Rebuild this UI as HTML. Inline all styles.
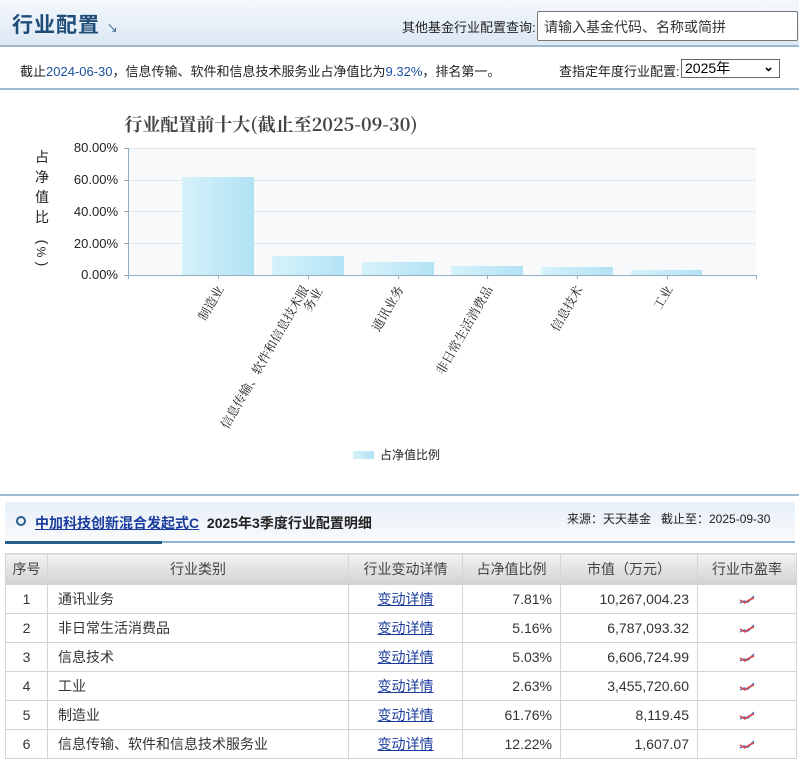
<!DOCTYPE html>
<html><head><meta charset="utf-8"><style>
*{margin:0;padding:0;box-sizing:border-box}
body{width:799px;height:763px;background:#fff;font-family:"Liberation Sans","Noto Sans CJK SC",sans-serif;font-size:13px;color:#333;position:relative;overflow:hidden}
.abs{position:absolute}
.hdr{left:0;top:0;width:799px;height:47px;background:linear-gradient(#f4f8fc,#dce8f4);border-bottom:2px solid #9fb9cf}
.t1{left:12px;top:9px;font-size:21px;font-weight:bold;color:#1f4d78;letter-spacing:1px}
.inp{left:537px;top:11px;width:261px;height:30px;border:1px solid #777;background:#fff;font-size:14px;color:#333;padding:5px 0 0 6px;border-radius:2px}
.row2{left:0;top:49px;width:799px;height:41px;border-bottom:2px solid #9fb9cf}
.sel{left:681px;top:59px;width:99px;height:19px;border:1px solid #666;font-size:14px;padding-left:3px;line-height:17px;color:#000}
table{position:absolute;left:5px;top:553px;border-collapse:collapse;width:792px}
td,th{border:1px solid #d4d4d4;height:29px;font-size:14px;color:#333;font-weight:normal}
th{background:linear-gradient(#f2f2f2,#d2d2d2);height:31px;color:#444}
td a{color:#1a3c9c;text-decoration:underline}
.r{text-align:right;padding-right:8px}
.c{text-align:center}
td svg{vertical-align:middle}
</style></head><body>
<div class="abs hdr"></div>
<div class="abs t1">行业配置 <span style="font-size:11px;font-weight:normal">↘</span></div>
<div class="abs" style="left:402px;top:17px;font-size:13px;color:#222">其他基金行业配置查询:</div>
<div class="abs inp">请输入基金代码、名称或简拼</div>
<div class="abs row2"></div>
<div class="abs" style="left:20px;top:61px;font-size:13px;color:#222">截止<span style="color:#1a4f9c">2024-06-30</span>，信息传输、软件和信息技术服务业占净值比为<span style="color:#1a4f9c">9.32%</span>，排名第一。</div>
<div class="abs" style="left:559px;top:61px;font-size:13px;color:#222">查指定年度行业配置:</div>
<div class="abs sel">2025年<span style="position:absolute;right:5px;top:-2px;font-size:13px;font-weight:bold">⌄</span></div>

<svg class="abs" style="left:0;top:92px" width="799" height="410" xmlns="http://www.w3.org/2000/svg">
<text x="271" y="39" text-anchor="middle" font-family="Noto Serif CJK SC,serif" font-size="18" font-weight="bold" fill="#444">行业配置前十大(截止至2025-09-30)</text>
<rect x="128" y="56" width="628" height="127" fill="#f8f9fb"/>
<g stroke="#e0e6ee" stroke-width="1"><line x1="128" y1="56.5" x2="756" y2="56.5"/><line x1="128" y1="88.5" x2="756" y2="88.5"/><line x1="128" y1="119.5" x2="756" y2="119.5"/><line x1="128" y1="151.5" x2="756" y2="151.5"/></g>
<defs><linearGradient id="g" x1="0" x2="1"><stop offset="0" stop-color="#d6f2fb"/><stop offset="1" stop-color="#b2e2f3"/></linearGradient></defs>
<g fill="url(#g)">
<rect x="182" y="85" width="72" height="98"/><rect x="272" y="164" width="72" height="19"/><rect x="362" y="170" width="72" height="13"/><rect x="451" y="174" width="72" height="9"/><rect x="541" y="175" width="72" height="8"/><rect x="631" y="178" width="71" height="5"/></g>
<g stroke="#90aec4"><line x1="128.5" y1="56" x2="128.5" y2="187"/><line x1="128" y1="183.5" x2="757" y2="183.5"/>
<line x1="124" y1="56.5" x2="128" y2="56.5"/><line x1="124" y1="88.5" x2="128" y2="88.5"/><line x1="124" y1="119.5" x2="128" y2="119.5"/><line x1="124" y1="151.5" x2="128" y2="151.5"/><line x1="124" y1="183.5" x2="128" y2="183.5"/>
<line x1="218.5" y1="183" x2="218.5" y2="187"/><line x1="308.5" y1="183" x2="308.5" y2="187"/><line x1="398.5" y1="183" x2="398.5" y2="187"/><line x1="487.5" y1="183" x2="487.5" y2="187"/><line x1="577.5" y1="183" x2="577.5" y2="187"/><line x1="667.5" y1="183" x2="667.5" y2="187"/><line x1="756.5" y1="183" x2="756.5" y2="187"/></g>
<g font-size="13" fill="#222" text-anchor="end"><text x="118" y="60">80.00%</text><text x="118" y="92">60.00%</text><text x="118" y="124">40.00%</text><text x="118" y="156">20.00%</text><text x="118" y="187">0.00%</text></g>
<g font-size="14" fill="#222" text-anchor="middle"><text x="42" y="70">占</text><text x="42" y="90">净</text><text x="42" y="110">值</text><text x="42" y="130">比</text>
<text transform="translate(38,150) rotate(90)" text-anchor="middle">(</text><text transform="translate(37,160) rotate(90)" text-anchor="middle" font-size="12">%</text><text transform="translate(38,172) rotate(90)" text-anchor="middle">)</text></g>
<g font-size="12.5" fill="#222" font-family="Noto Serif CJK SC,serif" text-anchor="end">
<text transform="translate(224,197) rotate(-60)">制造业</text>
<text transform="translate(309,197) rotate(-60)">信息传输、软件和信息技术服</text>
<text transform="translate(323,199) rotate(-60)">务业</text>
<text transform="translate(404,197) rotate(-60)">通讯业务</text>
<text transform="translate(493,197) rotate(-60)">非日常生活消费品</text>
<text transform="translate(583,197) rotate(-60)">信息技术</text>
<text transform="translate(673,197) rotate(-60)">工业</text></g>
<rect x="353" y="359" width="21" height="8" fill="url(#g)"/>
<text x="380" y="367" font-size="12" fill="#222">占净值比例</text>
<line x1="0" y1="403" x2="799" y2="403" stroke="#9fb9cf" stroke-width="2"/>
</svg>

<div class="abs" style="left:5px;top:502px;width:790px;height:41px;background:linear-gradient(#e6eef7,#fbfcfe);border-radius:4px 4px 0 0"></div>
<div class="abs" style="left:5px;top:541px;width:157px;height:3px;background:#2a5f8c"></div>
<div class="abs" style="left:162px;top:541px;width:633px;height:2px;background:#8fb6d4"></div>
<div class="abs" style="left:16px;top:516px;width:10px;height:10px;border:2px solid #2a5f8c;border-radius:50%"></div>
<div class="abs" style="left:35px;top:513px;font-size:14px;font-weight:bold;color:#222"><span style="color:#1a3c9c;text-decoration:underline">中加科技创新混合发起式C</span>&nbsp; 2025年3季度行业配置明细</div>
<div class="abs" style="left:567px;top:510px;font-size:12px;color:#222">来源：天天基金&nbsp;&nbsp; 截止至：2025-09-30</div>

<table>
<tr><th style="width:42px">序号</th><th style="width:301px">行业类别</th><th style="width:114px">行业变动详情</th><th style="width:98px">占净值比例</th><th style="width:137px">市值（万元）</th><th>行业市盈率</th></tr>
<tr><td class="c">1</td><td style="padding-left:10px">通讯业务</td><td class="c"><a>变动详情</a></td><td class="r">7.81%</td><td class="r">10,267,004.23</td><td class="c"><svg width="16" height="10"><polyline points="1,8 5,6 9,7 15,1" fill="none" stroke="#4a78c8" stroke-width="1.5"/><polyline points="1,5 6,8 10,5 15,3" fill="none" stroke="#e04040" stroke-width="1.5"/></svg></td></tr>
<tr><td class="c">2</td><td style="padding-left:10px">非日常生活消费品</td><td class="c"><a>变动详情</a></td><td class="r">5.16%</td><td class="r">6,787,093.32</td><td class="c"><svg width="16" height="10"><polyline points="1,8 5,6 9,7 15,1" fill="none" stroke="#4a78c8" stroke-width="1.5"/><polyline points="1,5 6,8 10,5 15,3" fill="none" stroke="#e04040" stroke-width="1.5"/></svg></td></tr>
<tr><td class="c">3</td><td style="padding-left:10px">信息技术</td><td class="c"><a>变动详情</a></td><td class="r">5.03%</td><td class="r">6,606,724.99</td><td class="c"><svg width="16" height="10"><polyline points="1,8 5,6 9,7 15,1" fill="none" stroke="#4a78c8" stroke-width="1.5"/><polyline points="1,5 6,8 10,5 15,3" fill="none" stroke="#e04040" stroke-width="1.5"/></svg></td></tr>
<tr><td class="c">4</td><td style="padding-left:10px">工业</td><td class="c"><a>变动详情</a></td><td class="r">2.63%</td><td class="r">3,455,720.60</td><td class="c"><svg width="16" height="10"><polyline points="1,8 5,6 9,7 15,1" fill="none" stroke="#4a78c8" stroke-width="1.5"/><polyline points="1,5 6,8 10,5 15,3" fill="none" stroke="#e04040" stroke-width="1.5"/></svg></td></tr>
<tr><td class="c">5</td><td style="padding-left:10px">制造业</td><td class="c"><a>变动详情</a></td><td class="r">61.76%</td><td class="r">8,119.45</td><td class="c"><svg width="16" height="10"><polyline points="1,8 5,6 9,7 15,1" fill="none" stroke="#4a78c8" stroke-width="1.5"/><polyline points="1,5 6,8 10,5 15,3" fill="none" stroke="#e04040" stroke-width="1.5"/></svg></td></tr>
<tr><td class="c">6</td><td style="padding-left:10px">信息传输、软件和信息技术服务业</td><td class="c"><a>变动详情</a></td><td class="r">12.22%</td><td class="r">1,607.07</td><td class="c"><svg width="16" height="10"><polyline points="1,8 5,6 9,7 15,1" fill="none" stroke="#4a78c8" stroke-width="1.5"/><polyline points="1,5 6,8 10,5 15,3" fill="none" stroke="#e04040" stroke-width="1.5"/></svg></td></tr>
</table>
</body></html>
